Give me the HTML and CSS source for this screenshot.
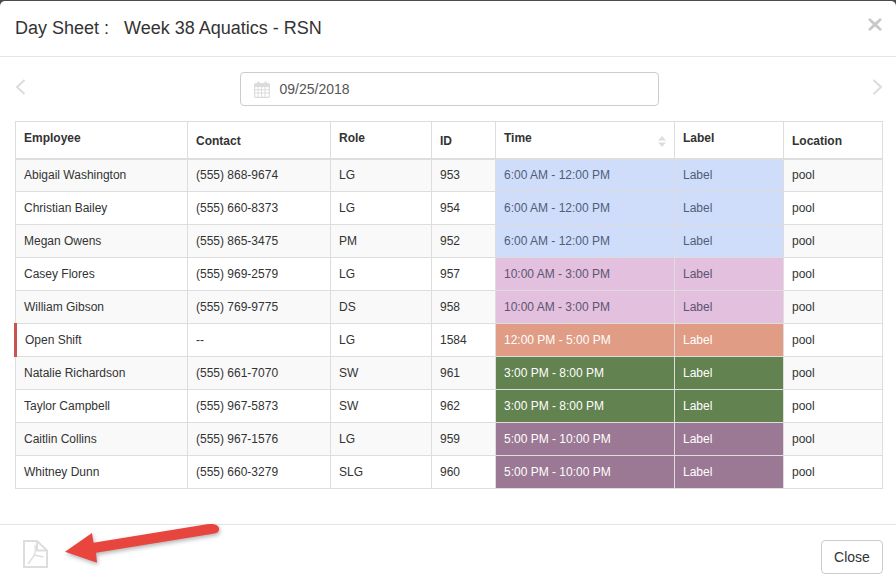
FILE: index.html
```html
<!DOCTYPE html>
<html lang="en">
<head>
<meta charset="utf-8">
<title>Day Sheet</title>
<link rel="stylesheet" href="styles.css">
</head>
<body>
<div class="modal">
  <header class="modal-header">
    <h1 class="modal-title"><span class="title-lead">Day Sheet :</span><span>Week 38 Aquatics - RSN</span></h1>
    <svg class="close-x" viewBox="0 0 14 14" aria-hidden="true"><path d="M1.9 0.4 7 5.1 12.1 0.4 13.9 2.2 9.2 7 13.9 11.8 12.1 13.6 7 8.9 1.9 13.6 0.1 11.8 4.8 7 0.1 2.2Z"/></svg>
  </header>
  <main class="modal-body">
    <div class="date-row">
      <svg class="chevron" viewBox="0 0 11 16" aria-hidden="true"><path d="M9.5 1 2 8l7.5 7"/></svg>
      <div class="date-field">
        <svg class="cal" viewBox="0 0 16 17" aria-hidden="true"><path fill-rule="evenodd" d="M1.5 2H3.5V0.5H5.5V2H10.5V0.5H12.5V2H14.5A1.5 1.5 0 0 1 16 3.5V15.5A1.5 1.5 0 0 1 14.5 17H1.5A1.5 1.5 0 0 1 0 15.5V3.5A1.5 1.5 0 0 1 1.5 2ZM1.2 6V8.2H3.5V6ZM4.5 6V8.2H7V6ZM8 6V8.2H10.5V6ZM11.5 6V8.2H14.8V6ZM1.2 9.2V11.6H3.5V9.2ZM4.5 9.2V11.6H7V9.2ZM8 9.2V11.6H10.5V9.2ZM11.5 9.2V11.6H14.8V9.2ZM1.2 12.6V15.8H3.5V12.6ZM4.5 12.6V15.8H7V12.6ZM8 12.6V15.8H10.5V12.6ZM11.5 12.6V15.8H14.8V12.6Z"/></svg>
        <span>09/25/2018</span>
      </div>
      <svg class="chevron" viewBox="0 0 11 16" aria-hidden="true"><path d="M1.5 1 9 8l-7.5 7"/></svg>
    </div>
    <table class="sheet">
      <colgroup>
        <col class="c1"><col class="c2"><col class="c3"><col class="c4"><col class="c5"><col class="c6"><col class="c7">
      </colgroup>
      <thead>
        <tr>
          <th class="up">Employee</th>
          <th>Contact</th>
          <th class="up">Role</th>
          <th>ID</th>
          <th class="up sortable">Time
            <svg class="sort" viewBox="0 0 8 11" aria-hidden="true"><path d="M4 0 8 4.4H0ZM0 6.6H8L4 11Z"/></svg>
          </th>
          <th class="up">Label</th>
          <th>Location</th>
        </tr>
      </thead>
      <tbody>
        <tr><td>Abigail Washington</td><td>(555) 868-9674</td><td>LG</td><td>953</td><td class="s-blue">6:00 AM - 12:00 PM</td><td class="s-blue">Label</td><td>pool</td></tr>
        <tr><td>Christian Bailey</td><td>(555) 660-8373</td><td>LG</td><td>954</td><td class="s-blue">6:00 AM - 12:00 PM</td><td class="s-blue">Label</td><td>pool</td></tr>
        <tr><td>Megan Owens</td><td>(555) 865-3475</td><td>PM</td><td>952</td><td class="s-blue">6:00 AM - 12:00 PM</td><td class="s-blue">Label</td><td>pool</td></tr>
        <tr><td>Casey Flores</td><td>(555) 969-2579</td><td>LG</td><td>957</td><td class="s-pink">10:00 AM - 3:00 PM</td><td class="s-pink">Label</td><td>pool</td></tr>
        <tr><td>William Gibson</td><td>(555) 769-9775</td><td>DS</td><td>958</td><td class="s-pink">10:00 AM - 3:00 PM</td><td class="s-pink">Label</td><td>pool</td></tr>
        <tr><td class="open">Open Shift</td><td>--</td><td>LG</td><td>1584</td><td class="s-salmon">12:00 PM - 5:00 PM</td><td class="s-salmon">Label</td><td>pool</td></tr>
        <tr><td>Natalie Richardson</td><td>(555) 661-7070</td><td>SW</td><td>961</td><td class="s-green">3:00 PM - 8:00 PM</td><td class="s-green">Label</td><td>pool</td></tr>
        <tr><td>Taylor Campbell</td><td>(555) 967-5873</td><td>SW</td><td>962</td><td class="s-green">3:00 PM - 8:00 PM</td><td class="s-green">Label</td><td>pool</td></tr>
        <tr><td>Caitlin Collins</td><td>(555) 967-1576</td><td>LG</td><td>959</td><td class="s-purple">5:00 PM - 10:00 PM</td><td class="s-purple">Label</td><td>pool</td></tr>
        <tr><td>Whitney Dunn</td><td>(555) 660-3279</td><td>SLG</td><td>960</td><td class="s-purple">5:00 PM - 10:00 PM</td><td class="s-purple">Label</td><td>pool</td></tr>
      </tbody>
    </table>
  </main>
  <footer class="modal-footer">
    <svg class="pdf" viewBox="0 0 25 28" aria-hidden="true">
      <path class="pdf-line" d="M1 1H14L24 10.5V27H1Z"/>
      <path class="pdf-line" d="M14 1V10.5H24"/>
      <path class="pdf-thin" d="M5 24 11.5 15Q13 9 12 5M11.5 15 20.5 17"/>
    </svg>
    <button class="close-btn" type="button">Close</button>
    <svg class="arrow" viewBox="0 0 170 50" aria-hidden="true">
      <path d="M1 27.7 28 9 29.5 18.7 143 0.3C150 -0.7 156 1 155 6 154.5 8.5 152 9.3 149 9.7L32 28.7 33 38.7Z"/>
    </svg>
  </footer>
</div>
</body>
</html>
```

FILE: styles.css
```css
* { box-sizing: border-box; }

html, body {
  margin: 0;
  height: 100%;
}

body {
  background: #4a4a4a;
  font-family: "Liberation Sans", Arial, sans-serif;
  color: #333;
  overflow: hidden;
}

.modal {
  margin-top: 1px;
  height: 587px;
  background: #fff;
  border-radius: 5px 5px 0 0;
  display: flex;
  flex-direction: column;
}

.modal-header {
  height: 56px;
  flex: none;
  border-bottom: 1px solid #e5e5e5;
  padding: 0 14px 0 15px;
  display: flex;
  justify-content: space-between;
  align-items: center;
}

.modal-title {
  margin: 0 0 2px;
  font-size: 18px;
  font-weight: 400;
  line-height: 20px;
  color: #333;
  display: flex;
  gap: 15px;
}

.close-x {
  width: 14px;
  height: 15px;
  fill: #c8c8c8;
  margin-top: -8px;
}

.modal-body {
  flex: 1;
  padding: 15px 13px 0 15px;
}

.date-row {
  display: flex;
  justify-content: space-between;
  align-items: flex-start;
  height: 34px;
  margin-bottom: 15px;
}

.chevron {
  width: 11px;
  height: 16px;
  margin-top: 7px;
  fill: none;
  stroke: #dcdcdc;
  stroke-width: 2;
}

.date-field {
  width: 419px;
  height: 34px;
  border: 1px solid #ccc;
  border-radius: 4px;
  display: flex;
  align-items: center;
  gap: 10px;
  padding-left: 13px;
  font-size: 14px;
  color: #555;
}

.cal {
  width: 16px;
  height: 17px;
  fill: #dcdcdc;
}

.sheet {
  width: 867px;
  table-layout: fixed;
  border-collapse: collapse;
  font-size: 12px;
  color: #333;
}

.c1 { width: 172px; }
.c2 { width: 143px; }
.c3 { width: 101px; }
.c4 { width: 64px; }
.c5 { width: 179px; }
.c6 { width: 109px; }
.c7 { width: 99px; }

.sheet th,
.sheet td {
  border: 1px solid #ddd;
  padding: 0 8px;
  text-align: left;
}

.sheet th {
  height: 37px;
  border-bottom-width: 2px;
  font-weight: 700;
  vertical-align: bottom;
  padding-bottom: 8px;
  line-height: 17px;
}

.sheet th.up {
  vertical-align: top;
  padding-top: 8px;
  padding-bottom: 0;
}

.sheet th.sortable { position: relative; }

.sort {
  position: absolute;
  right: 8px;
  top: 14px;
  width: 8px;
  height: 11px;
  fill: #ddd;
}

.sheet td {
  height: 33px;
  line-height: 17px;
}

.sheet tbody tr:nth-child(odd) td { background: #f9f9f9; }

.sheet tbody tr td.open {
  padding-left: 9px;
  position: relative;
}

.sheet tbody tr td.open::before {
  content: "";
  position: absolute;
  left: -2px;
  top: -1px;
  bottom: -1px;
  width: 3px;
  background: #c9534f;
}

.sheet tbody tr td.s-blue { background: #cfddfb; color: #4f5d78; }
.sheet tbody tr td.s-pink { background: #e2c0de; color: #5d5570; }
.sheet tbody tr td.s-salmon { background: #e09c84; color: #fff; }
.sheet tbody tr td.s-green { background: #628250; color: #fff; }
.sheet tbody tr td.s-purple { background: #9b7894; color: #fff; }

.modal-footer {
  flex: none;
  height: 64px;
  border-top: 1px solid #e5e5e5;
  padding: 15px 13px 0 23px;
  display: flex;
  justify-content: space-between;
  align-items: flex-start;
  position: relative;
}

.pdf {
  width: 25px;
  height: 28px;
}

.pdf-line {
  fill: none;
  stroke: #ddd;
  stroke-width: 2;
}

.pdf-thin {
  fill: none;
  stroke: #ddd;
  stroke-width: 1.4;
}

.close-btn {
  width: 62px;
  height: 34px;
  padding: 0;
  background: #fff;
  border: 1px solid #ccc;
  border-radius: 4px;
  font: 14px "Liberation Sans", Arial, sans-serif;
  color: #333;
}

.arrow {
  position: absolute;
  left: 64px;
  top: -1px;
  width: 170px;
  height: 50px;
  fill: #e8453f;
  overflow: visible;
  filter: drop-shadow(1px 2px 2px rgba(0, 0, 0, 0.3));
}
```
